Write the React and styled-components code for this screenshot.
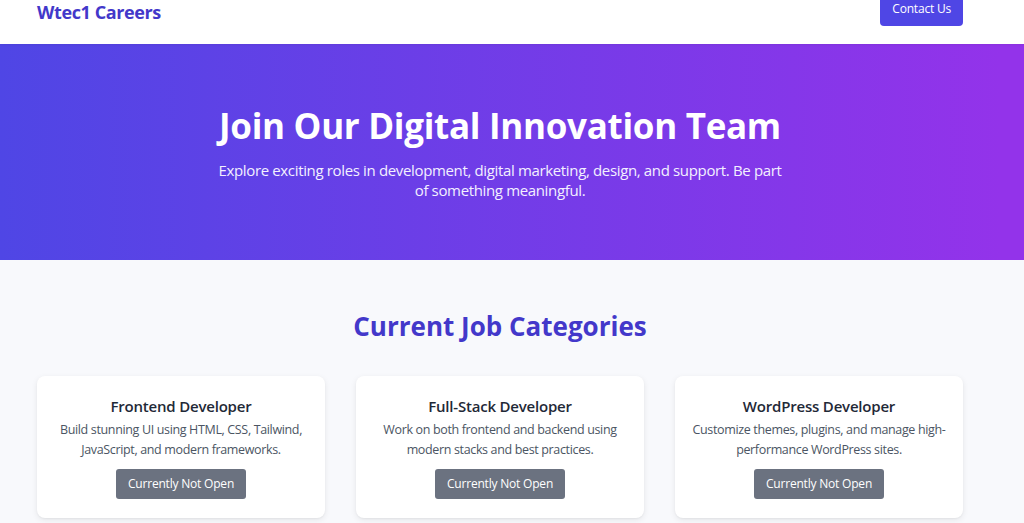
import React from 'react'
import styled, { createGlobalStyle } from 'styled-components'

const GlobalStyle = createGlobalStyle`
  * { box-sizing: border-box; }
  html, body { margin: 0; padding: 0; }
  body {
    font-family: "Open Sans", "Noto Sans", Arial, sans-serif;
    background: #f8f9fc;
    overflow: hidden;
  }
`

const Page = styled.div`
  margin-top: -20px;
  min-height: 600px;
  background: #f8f9fc;
`

const Header = styled.header`
  height: 64px;
  background: #fff;
  display: flex;
  align-items: center;
  justify-content: space-between;
  padding: 0 61px 0 37px;
  box-shadow: 0 1px 2px rgba(0, 0, 0, 0.06);
  position: relative;
  z-index: 1;
`

const Logo = styled.div`
  font-size: 18px;
  font-weight: 700;
  color: #4338ca;
  letter-spacing: -0.4px;
`

const ContactButton = styled.button`
  border: none;
  background: #4f46e5;
  color: #fff;
  font-family: inherit;
  font-size: 12px;
  line-height: 20px;
  letter-spacing: -0.2px;
  padding: 7px 12px;
  border-radius: 4px;
  margin-bottom: 6px;
`

const Hero = styled.section`
  background: linear-gradient(90deg, #4f46e5 0%, #9333ea 100%);
  padding: 60px 24px;
  display: flex;
  flex-direction: column;
  align-items: center;
  text-align: center;
  width: 1000px;
  box-shadow: 24px 0 0 #9333ea;
`

const HeroTitle = styled.h1`
  margin: 0 0 12px;
  font-size: 35px;
  line-height: 44px;
  font-weight: 700;
  color: #fff;
  letter-spacing: -0.3px;
`

const HeroText = styled.p`
  margin: 0;
  max-width: 568px;
  font-size: 15px;
  line-height: 20px;
  letter-spacing: -0.35px;
  color: #f3f0ff;
`

const Section = styled.section`
  padding: 50px 61px 40px 37px;
`

const SectionTitle = styled.h2`
  margin: 0 0 34px;
  text-align: center;
  font-size: 26px;
  line-height: 32px;
  font-weight: 700;
  color: #4338ca;
`

const Grid = styled.div`
  display: grid;
  grid-template-columns: repeat(3, 288px);
  gap: 31px;
`

const Card = styled.div`
  background: #fff;
  border-radius: 8px;
  padding: 18px 10px 19px;
  display: flex;
  flex-direction: column;
  align-items: center;
  text-align: center;
  box-shadow: 0 2px 6px rgba(0, 0, 0, 0.08), 0 1px 2px rgba(0, 0, 0, 0.04);
`

const CardTitle = styled.h3`
  margin: 0 0 2px;
  font-size: 15px;
  line-height: 24px;
  font-weight: 600;
  letter-spacing: -0.2px;
  color: #1f2937;
`

const CardText = styled.p`
  margin: 0 0 9px;
  font-size: 12.5px;
  line-height: 20px;
  letter-spacing: -0.35px;
  color: #4b5563;
`

const StatusButton = styled.button`
  border: none;
  background: #6b7280;
  color: #fff;
  font-family: inherit;
  font-size: 12px;
  line-height: 20px;
  letter-spacing: -0.2px;
  padding: 5px 12px;
  border-radius: 3px;
`

const jobs = [
  {
    title: 'Frontend Developer',
    text: 'Build stunning UI using HTML, CSS, Tailwind, JavaScript, and modern frameworks.',
  },
  {
    title: 'Full-Stack Developer',
    text: 'Work on both frontend and backend using modern stacks and best practices.',
  },
  {
    title: 'WordPress Developer',
    text: 'Customize themes, plugins, and manage high-performance WordPress sites.',
  },
]

export default function App() {
  return (
    <Page>
      <GlobalStyle />
      <Header>
        <Logo>Wtec1 Careers</Logo>
        <ContactButton>Contact Us</ContactButton>
      </Header>
      <Hero>
        <HeroTitle>Join Our Digital Innovation Team</HeroTitle>
        <HeroText>
          Explore exciting roles in development, digital marketing, design, and support. Be part
          of something meaningful.
        </HeroText>
      </Hero>
      <Section>
        <SectionTitle>Current Job Categories</SectionTitle>
        <Grid>
          {jobs.map((job) => (
            <Card key={job.title}>
              <CardTitle>{job.title}</CardTitle>
              <CardText>{job.text}</CardText>
              <StatusButton>Currently Not Open</StatusButton>
            </Card>
          ))}
        </Grid>
      </Section>
    </Page>
  )
}
